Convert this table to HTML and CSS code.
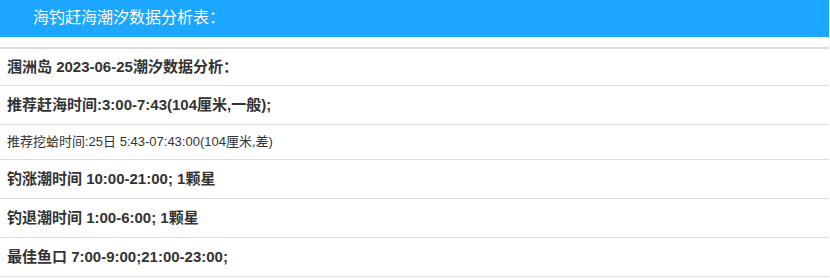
FILE: index.html
```html
<!DOCTYPE html>
<html lang="zh">
<head>
<meta charset="utf-8">
<title>海钓赶海潮汐数据分析表</title>
<link rel="stylesheet" href="styles.css">
</head>
<body>
<div class="page">
  <div class="header">海钓赶海潮汐数据分析表：</div>
  <div class="list">
    <div class="row first">涠洲岛 2023-06-25潮汐数据分析：</div>
    <div class="row">推荐赶海时间:3:00-7:43(104厘米,一般);</div>
    <div class="row small">推荐挖蛤时间:25日 5:43-07:43:00(104厘米,差)</div>
    <div class="row">钓涨潮时间 10:00-21:00; 1颗星</div>
    <div class="row">钓退潮时间 1:00-6:00; 1颗星</div>
    <div class="row">最佳鱼口 7:00-9:00;21:00-23:00;</div>
  </div>
</div>
</body>
</html>
```

FILE: styles.css
```css
html, body {
  margin: 0;
  padding: 0;
  background: #fff;
}
.page {
  width: 829px;
  font-family: "Liberation Sans", Arial, "Noto Sans CJK SC", sans-serif;
}
.header {
  background: #1ba6ff;
  color: #fff;
  height: 37px;
  line-height: 36px;
  padding-left: 33px;
  font-size: 16px;
}
.list {
  margin-top: 10px;
  border-top: 2px solid #dddddd;
}
.row {
  padding: 10px 7px;
  line-height: 18px;
  font-size: 15px;
  font-weight: bold;
  color: #333;
  border-bottom: 1px solid #dddddd;
}
.row.first {
  padding: 9px 7px;
}
.row.small {
  font-size: 13px;
  font-weight: normal;
  line-height: 14px;
}
```
